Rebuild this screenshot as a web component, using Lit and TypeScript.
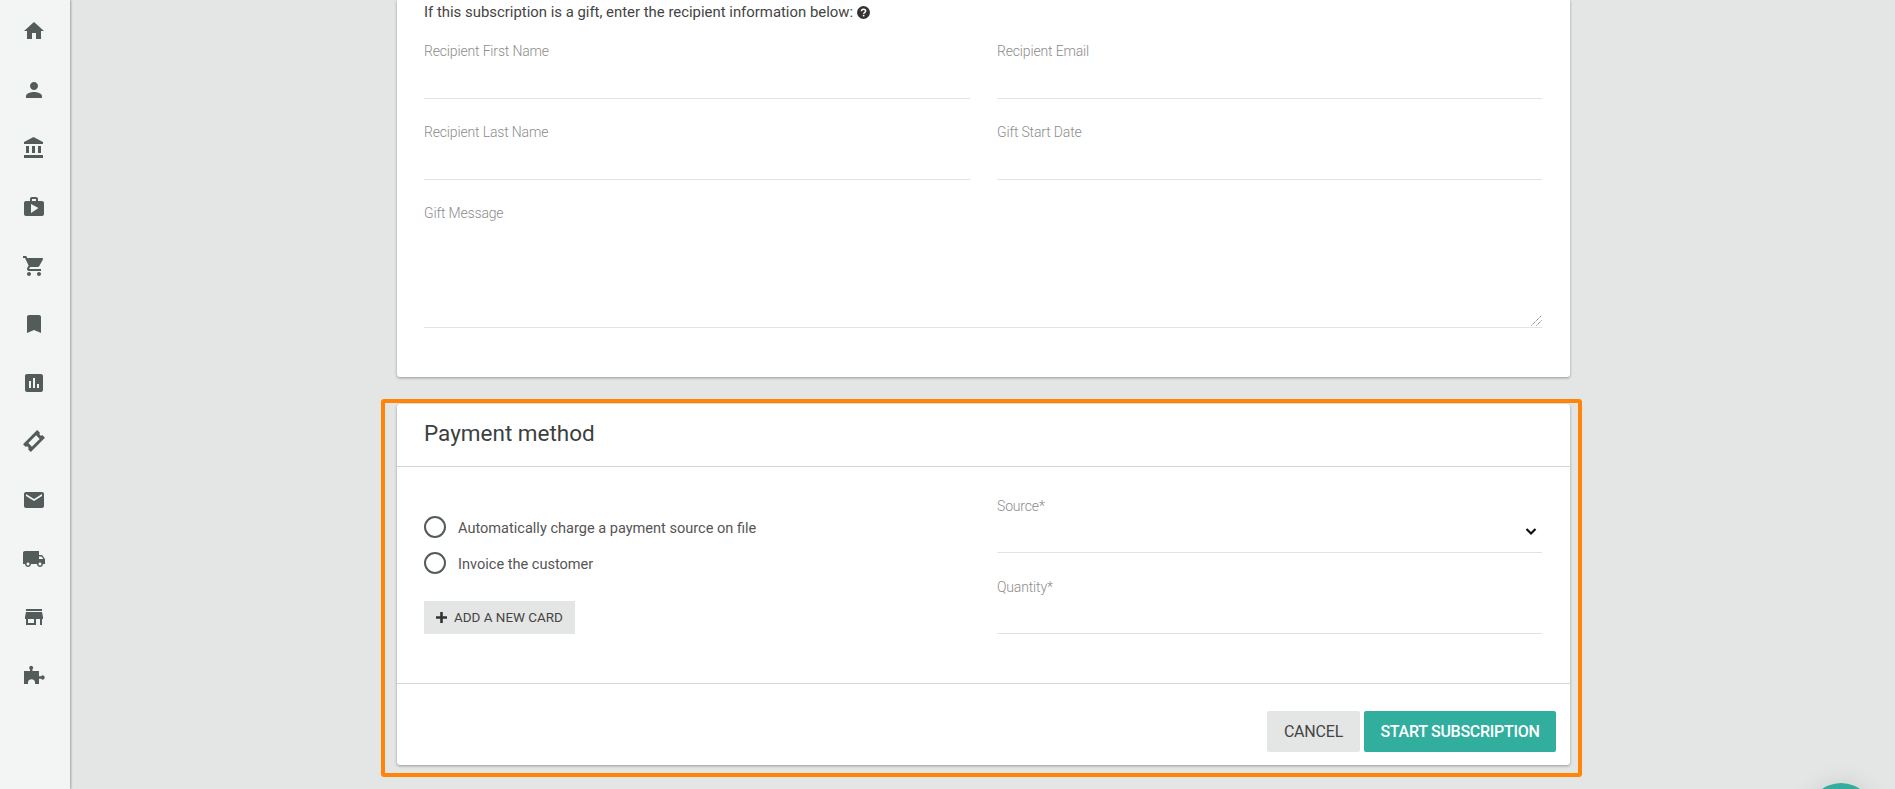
import { LitElement, html, css, svg } from "lit";
import { customElement } from "lit/decorators.js";

const TICKET = 7;
const ICONS = [
  "M10 20v-6h4v6h5v-8h3L12 3 2 12h3v8z",
  "M12 12c2.21 0 4-1.79 4-4s-1.79-4-4-4-4 1.79-4 4 1.79 4 4 4zm0 2c-2.67 0-8 1.34-8 4v2h16v-2c0-2.66-5.33-4-8-4z",
  "M4 10v7h3v-7H4zm6 0v7h3v-7h-3zM2 22h19v-3H2v3zm14-12v7h3v-7h-3zm-4.5-9L2 6v2h19V6l-9.5-5z",
  "M20 6h-4V4c0-1.11-.89-2-2-2h-4c-1.11 0-2 .89-2 2v2H4c-1.11 0-2 .89-2 2v11c0 1.11.89 2 2 2h16c1.11 0 2-.89 2-2V8c0-1.11-.89-2-2-2zM10 4h4v2h-4V4zm-1 14V9l7.5 4L9 18z",
  "M7 18c-1.1 0-1.99.9-1.99 2S5.9 22 7 22s2-.9 2-2-.9-2-2-2zM1 2v2h2l3.6 7.59-1.35 2.45c-.16.28-.25.61-.25.96 0 1.1.9 2 2 2h12v-2H7.42c-.14 0-.25-.11-.25-.25l.03-.12.9-1.63h7.45c.75 0 1.41-.41 1.75-1.03l3.58-6.49c.08-.14.12-.31.12-.48 0-.55-.45-1-1-1H5.21l-.94-2H1zm16 16c-1.1 0-1.99.9-1.99 2s.89 2 1.99 2 2-.9 2-2-.9-2-2-2z",
  "M17 3H7c-1.1 0-1.99.9-1.99 2L5 21l7-3 7 3V5c0-1.1-.9-2-2-2z",
  "M19 3H5c-1.1 0-2 .9-2 2v14c0 1.1.9 2 2 2h14c1.1 0 2-.9 2-2V5c0-1.1-.9-2-2-2zM9 17H7v-7h2v7zm4 0h-2V7h2v10zm4 0h-2v-4h2v4z",
  "M2 6.5h20v3.9a1.6 1.6 0 0 0 0 3.2v3.9H2v-3.9a1.6 1.6 0 0 0 0-3.2zM6.5 9.5v5h11v-5z",
  "M20 4H4c-1.1 0-1.99.9-1.99 2L2 18c0 1.1.9 2 2 2h16c1.1 0 2-.9 2-2V6c0-1.1-.9-2-2-2zm0 4l-8 5-8-5V6l8 5 8-5v2z",
  "M20 8h-3V4H3c-1.1 0-2 .9-2 2v11h2c0 1.66 1.34 3 3 3s3-1.34 3-3h6c0 1.66 1.34 3 3 3s3-1.34 3-3h2v-5l-3-4zM6 18.5c-.83 0-1.5-.67-1.5-1.5s.67-1.5 1.5-1.5 1.5.67 1.5 1.5-.67 1.5-1.5 1.5zm13.5-9l1.96 2.5H17V9.5h2.5zm-1.5 9c-.83 0-1.5-.67-1.5-1.5s.67-1.5 1.5-1.5 1.5.67 1.5 1.5-.67 1.5-1.5 1.5z",
  "M20 4H4v2h16V4zm1 10v-2l-1-5H4l-1 5v2h1v6h10v-6h4v6h2v-6h1zm-9 4H6v-4h6v4z",
  "M2 7H8V5.4A2 2 0 1 1 10.4 5.4V7H17V12.2H19.2A2 2 0 1 1 19.2 14.8H17V20H13V18A3.6 3.6 0 0 0 6 18V20H2Z",
];

@customElement("app-root")
export class AppRoot extends LitElement {
  static styles = css`
    :host {
      display: block;
      height: 789px;
      overflow: hidden;
      position: relative;
      background: #e4e6e5;
      font-family: Roboto, "Liberation Sans", sans-serif;
      color: #444;
    }
    .layout { display: flex; height: 789px; }
    .sidebar {
      width: 70px;
      flex: none;
      background: #f2f5f4;
      box-shadow: 1px 0 2px rgba(0, 0, 0, 0.3);
      padding-top: 2px;
      box-sizing: border-box;
      z-index: 1;
    }
    .nav {
      height: 58.6px;
      display: flex;
      align-items: center;
      justify-content: center;
      box-sizing: border-box;
      padding-right: 2px;
    }
    .nav svg { width: 24px; height: 24px; fill: #535b5b; fill-rule: evenodd; }
    .main { flex: none; width: 1173px; margin-left: 327px; }
    .card {
      background: #fff;
      border-radius: 3px;
      box-shadow: 0 1px 3px rgba(0, 0, 0, 0.35);
    }
    .gift {
      padding: 0 27px 49px;
      border-radius: 0 0 3px 3px;
    }
    .intro {
      height: 18px;
      display: flex;
      align-items: center;
      gap: 4px;
      padding-top: 6px;
      box-sizing: border-box;
      font-size: 14.9px;
      line-height: 18px;
      color: #444;
    }
    .intro svg { width: 13px; height: 13px; flex: none; }
    .grid {
      display: grid;
      grid-template-columns: 546px 545px;
      column-gap: 27px;
    }
    .wide { grid-column: 1 / -1; }
    .field {
      position: relative;
      height: 81px;
      box-sizing: border-box;
      padding-top: 23px;
      border-bottom: 1px solid #e2e4e3;
      font-size: 14px;
      letter-spacing: -0.16px;
      line-height: 20px;
      font-weight: 300;
      color: #8c8c8c;
    }
    .field.low { padding-top: 24px; }
    .field.tall { height: 148px; }
    .grip {
      position: absolute;
      right: 0;
      bottom: 1px;
      width: 11px;
      height: 11px;
    }
    .chevron {
      position: absolute;
      right: 5px;
      top: 55px;
      width: 12px;
      height: 9px;
    }
    .frame {
      margin: 22px -12px 0 -16px;
      border: 4px solid #ff8408;
      border-radius: 3px;
      padding: 1px 8px 8px 12px;
    }
    .head {
      height: 62px;
      box-sizing: content-box;
      padding: 0 27px;
      display: flex;
      align-items: flex-start;
      border-bottom: 1px solid #d4d6d6;
      font-size: 22.5px;
      line-height: 58px;
      color: #3c3f3f;
      font-weight: 400;
    }
    .body {
      height: 217px;
      box-sizing: border-box;
      padding: 5px 27px 0;
      border-bottom: 1px solid #d4d6d6;
      display: grid;
      grid-template-columns: 546px 545px;
      column-gap: 27px;
    }
    .options { padding-top: 37px; }
    .radio {
      height: 36px;
      display: flex;
      align-items: center;
      gap: 12px;
      font-size: 14.55px;
      color: #555;
    }
    .radio span:last-child { margin-top: 2px; }
    .dot {
      width: 22px;
      height: 22px;
      box-sizing: border-box;
      border: 2px solid #555b5b;
      border-radius: 50%;
      flex: none;
    }
    .add {
      margin-top: 20px;
      width: 151px;
      height: 33px;
      border: 0;
      padding: 0 0 0 12px;
      background: #e4e6e5;
      display: flex;
      align-items: center;
      gap: 7px;
      font: 400 13.45px Roboto, "Liberation Sans", sans-serif;
      color: #444;
      box-sizing: border-box;
    }
    .add svg { width: 11px; height: 11px; flex: none; }
    .foot {
      height: 81px;
      box-sizing: border-box;
      padding: 27px 14px 0 0;
      display: flex;
      justify-content: flex-end;
      gap: 4px;
    }
    .btn {
      height: 41px;
      border: 0;
      border-radius: 2px;
      font: 400 16px Roboto, "Liberation Sans", sans-serif;
      padding: 0;
    }
    .cancel { width: 93px; background: #e4e6e5; color: #444; letter-spacing: -0.2px; }
    .start { width: 192px; background: #31ae9e; color: #fff; font-weight: 500; letter-spacing: -0.27px; }
    .fab {
      position: absolute;
      left: 1808px;
      top: 783px;
      width: 66px;
      height: 66px;
      border-radius: 50%;
      background: #31ae9e;
      box-shadow: 0 0 24px rgba(0, 0, 0, 0.1);
    }
  `;

  private field(label: string, extra = "") {
    return html`<div class="field ${extra}">${label}</div>`;
  }

  render() {
    return html`
      <div class="layout">
        <nav class="sidebar">
          ${ICONS.map(
            (d, i) => html`<div class="nav"><svg viewBox="0 0 24 24">${svg`<path d=${d} transform=${i === TICKET ? "rotate(-45 12 12)" : ""}></path>`}</svg></div>`
          )}
        </nav>
        <main class="main">
          <section class="card gift">
            <div class="intro">
              If this subscription is a gift, enter the recipient information below:
              <svg viewBox="0 0 13 13">
                <circle cx="6.5" cy="6.5" r="6.5" fill="#333"></circle>
                <path d="M4.5 5.2c0-1.2.9-2 2.1-2s2 .8 2 1.8c0 1.5-2 1.5-2 2.8" fill="none" stroke="#fff" stroke-width="1.5"></path>
                <rect x="5.8" y="8.8" width="1.6" height="1.6" fill="#fff"></rect>
              </svg>
            </div>
            <div class="grid">
              ${this.field("Recipient First Name")}
              ${this.field("Recipient Email")}
              ${this.field("Recipient Last Name")}
              ${this.field("Gift Start Date")}
              <div class="field tall wide">
                Gift Message
                <svg class="grip" viewBox="0 0 11 11">
                  <path d="M0.5 10.5 10.5 0.5M5.5 10.5 10.5 5.5" stroke="#555" stroke-width="1" stroke-dasharray="1 1" fill="none"></path>
                </svg>
              </div>
            </div>
          </section>
          <div class="frame">
            <section class="card">
              <div class="head">Payment method</div>
              <div class="body">
                <div class="options">
                  <label class="radio"><span class="dot"></span><span>Automatically charge a payment source on file</span></label>
                  <label class="radio"><span class="dot"></span><span>Invoice the customer</span></label>
                  <button class="add">
                    <svg viewBox="0 0 11 11"><path d="M5.5 0v11M0 5.5h11" stroke="#333" stroke-width="2.6"></path></svg>
                    ADD A NEW CARD
                  </button>
                </div>
                <div>
                  <div class="field low">
                    Source*
                    <svg class="chevron" viewBox="0 0 12 9"><path d="M1.5 2 6 6.5 10.5 2" fill="none" stroke="#111" stroke-width="2.2"></path></svg>
                  </div>
                  ${this.field("Quantity*", "low")}
                </div>
              </div>
              <div class="foot">
                <button class="btn cancel">CANCEL</button>
                <button class="btn start">START SUBSCRIPTION</button>
              </div>
            </section>
          </div>
        </main>
      </div>
      <div class="fab"></div>
    `;
  }
}
